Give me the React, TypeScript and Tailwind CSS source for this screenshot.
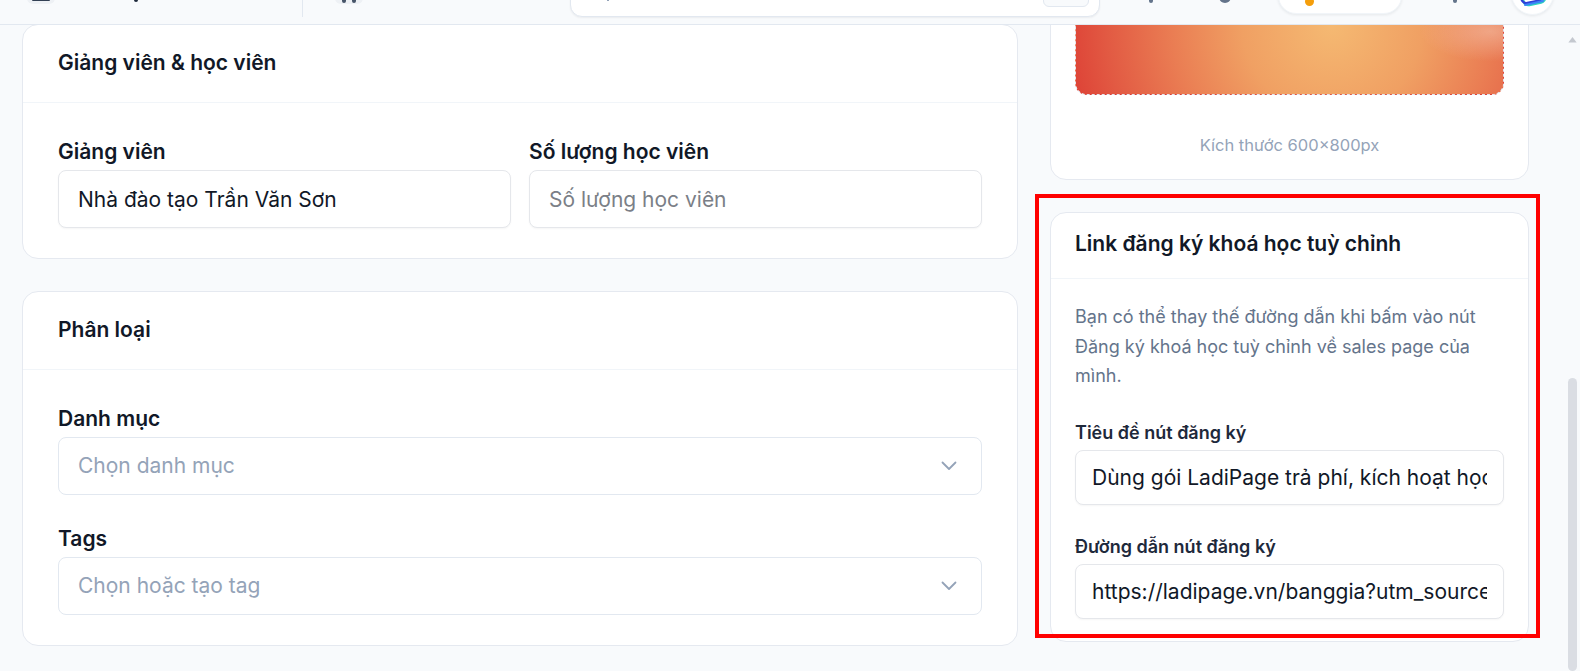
import React from "react";

type FieldProps = {
  label: string;
  value?: string;
  placeholder?: string;
};

function TopBar() {
  return (
    <div className="relative z-10 flex h-[25px] shrink-0 items-end overflow-hidden border-b border-[#e2e8f0] bg-[#f8fafc]">
      {/* menu toggle */}
      <div className="ml-[27px] mb-[20px] flex h-[34px] w-[28px] shrink-0 flex-col items-center justify-end rounded-md bg-[#eef1f5] pb-[3px]">
        <span className="h-[2px] w-[18px] rounded bg-[#334155]" />
      </div>
      <span className="ml-[79px] mb-[22px] h-[6px] w-[4px] shrink-0 rounded-b bg-[#1e293b]" />
      <span className="ml-[164px] mb-[7px] h-[30px] w-px shrink-0 bg-[#e2e8f0]" />
      {/* apps */}
      <div className="ml-[32px] mb-[20px] flex h-[30px] w-[28px] shrink-0 items-end justify-center gap-[6px] rounded-md bg-[#eef1f5] pb-[1px]">
        <span className="h-[3px] w-[4px] rounded-b bg-[#475569]" />
        <span className="h-[3px] w-[4px] rounded-b bg-[#475569]" />
      </div>
      {/* search */}
      <div className="ml-[207px] mb-[7px] flex h-[40px] w-[530px] shrink-0 items-end rounded-xl border border-[#e2e8f0] bg-white shadow-[0_1px_2px_rgba(15,23,42,0.06)]">
        <span className="ml-[36px] mb-[15px] h-[4px] w-[2px] bg-[#94a3b8]" />
        <span className="ml-auto mr-[10px] mb-[9px] h-[24px] w-[46px] rounded-md border border-[#e2e8f0] bg-[#f8fafc]" />
      </div>
      <span className="ml-[49px] mb-[21px] h-[6px] w-[4px] shrink-0 rounded-b bg-[#64748b]" />
      <span className="ml-[66px] mb-[21px] h-[12px] w-[12px] shrink-0 rounded-full bg-[#64748b]" />
      {/* credits */}
      <div className="ml-[47px] mb-[10px] flex h-[36px] w-[124px] shrink-0 items-end rounded-full border border-[#f1f5f9] bg-white shadow-[0_1px_3px_rgba(15,23,42,0.08)]">
        <span className="ml-[26px] mb-[7px] h-[9px] w-[9px] rounded-full bg-[#f59e0b]" />
      </div>
      <span className="ml-[51px] mb-[21px] h-[5px] w-[4px] shrink-0 rounded-b bg-[#64748b]" />
      {/* avatar */}
      <div className="ml-[54px] mb-[9px] flex h-[43px] w-[43px] shrink-0 items-end justify-center overflow-hidden rounded-full border border-[#f1f5f9] bg-white shadow-[0_1px_3px_rgba(15,23,42,0.08)]">
        <svg width="34" height="34" viewBox="0 0 34 34" className="mb-[4px]" fill="none">
          <rect x="6" y="6" width="22" height="22" rx="5" transform="rotate(-12 17 17)" stroke="#2dd4bf" strokeWidth="2.4" />
          <rect x="4" y="4" width="22" height="22" rx="5" transform="rotate(-12 15 15)" stroke="#2f3fd8" strokeWidth="2.4" />
          <path d="M9 29 L27 25" stroke="#3b82f6" strokeWidth="2" strokeLinecap="round" />
        </svg>
      </div>
    </div>
  );
}

function Chevron() {
  return (
    <svg width="16" height="10" viewBox="0 0 16 10" fill="none">
      <path d="M1.5 1.5 L8 8 L14.5 1.5" stroke="#94a3b8" strokeWidth="1.8" strokeLinecap="round" strokeLinejoin="round" />
    </svg>
  );
}

function TextField({ label, value, placeholder }: FieldProps) {
  return (
    <div>
      <label className="mb-[6px] block text-[21px] font-semibold leading-6 text-[#111827]">{label}</label>
      <input
        readOnly
        value={value ?? ""}
        placeholder={placeholder}
        className="block h-[58px] w-full rounded-lg border border-[#e5e7eb] bg-white px-[19px] text-[21px] text-[#111827] shadow-[0_1px_2px_rgba(0,0,0,0.04)] outline-none placeholder:text-[#7b7f87]"
      />
    </div>
  );
}

function SelectField({ label, placeholder }: FieldProps) {
  return (
    <div>
      <label className="mb-[6px] block text-[21px] font-semibold leading-6 text-[#111827]">{label}</label>
      <div className="flex h-[58px] w-full items-center justify-between rounded-lg border border-[#e2e8f0] bg-white pl-[19px] pr-[24px]">
        <span className="text-[21px] text-[#94a3b8]">{placeholder}</span>
        <Chevron />
      </div>
    </div>
  );
}

function SideField({ label, value }: FieldProps) {
  return (
    <div>
      <label className="mb-[5px] block text-[18px] font-semibold leading-6 text-[#1e293b]">{label}</label>
      <input
        readOnly
        value={value}
        className="block h-[55px] w-full rounded-lg border border-[#e5e7eb] bg-white px-4 text-[21px] text-[#111827] shadow-[0_1px_2px_rgba(0,0,0,0.04)] outline-none"
      />
    </div>
  );
}

function Card({ title, children }: { title: string; children: React.ReactNode }) {
  return (
    <section className="rounded-2xl border border-[#e5e9f0] bg-white">
      <header className="border-b border-[#f1f5f9] px-[35px] pt-[24px] pb-[25px]">
        <h2 className="text-[21px] font-semibold leading-7 text-[#111827]">{title}</h2>
      </header>
      <div className="px-[35px] pt-[37px] pb-[30px]">{children}</div>
    </section>
  );
}

function ScrollTrack() {
  return (
    <div className="flex w-[17px] shrink-0 flex-col items-center">
      <svg width="9" height="6" viewBox="0 0 9 6" className="mt-[12px] ml-[2px]">
        <path d="M4.5 0 L9 6 L0 6 Z" fill="#c4c8cf" />
      </svg>
      <div className="mt-[335px] ml-[2px] h-[320px] w-[9px] rounded-full bg-[#dadde3]" />
    </div>
  );
}

export default function App() {
  return (
    <div className="relative flex h-[671px] w-[1580px] flex-col overflow-hidden bg-[#f8fafc] font-['Inter',sans-serif]">
      <TopBar />

      <div className="flex min-h-0 flex-1">
        <div className="flex flex-1 gap-8 overflow-hidden pl-[22px]">
          {/* main column */}
          <div className="-mt-px flex w-[996px] shrink-0 flex-col gap-8">
            <Card title="Giảng viên & học viên">
              <div className="grid grid-cols-2 gap-[18px]">
                <TextField label="Giảng viên" value="Nhà đào tạo Trần Văn Sơn" />
                <TextField label="Số lượng học viên" placeholder="Số lượng học viên" />
              </div>
            </Card>

            <Card title="Phân loại">
              <div className="flex flex-col gap-8">
                <SelectField label="Danh mục" placeholder="Chọn danh mục" />
                <SelectField label="Tags" placeholder="Chọn hoặc tạo tag" />
              </div>
            </Card>
          </div>

          {/* sidebar column */}
          <div className="-mt-[255px] flex w-[479px] shrink-0 flex-col gap-8">
            <section className="rounded-2xl border border-[#e5e9f0] bg-white p-6">
              <div className="h-[300px] overflow-hidden rounded-xl border border-dashed border-[#e2e8f0] bg-[radial-gradient(ellipse_70px_30px_at_97%_79%,rgba(242,178,150,0.75),rgba(242,178,150,0)),radial-gradient(circle_at_60%_77%,#f5b972_0px,#f0a063_90px,#ea7d53_160px,#e25a43_225px,#dc3a32_280px)]" />
              <p className="mt-10 text-center text-[16.5px] leading-5 text-[#94a3b8]">Kích thước 600×800px</p>
            </section>

            <section className="rounded-2xl border border-[#e5e9f0] bg-white">
              <header className="border-b border-[#f1f5f9] px-6 pt-[17px] pb-[20px]">
                <h2 className="text-[21px] font-semibold leading-7 text-[#111827]">Link đăng ký khoá học tuỳ chỉnh</h2>
              </header>
              <div className="px-6 pt-[23px] pb-[22px]">
                <p className="max-w-[425px] text-[18px] leading-[29.5px] text-[#64748b]">
                  Bạn có thể thay thế đường dẫn khi bấm vào nút Đăng ký khoá học tuỳ chỉnh về sales page của mình.
                </p>
                <div className="mt-[30px] flex flex-col gap-[30px]">
                  <SideField label="Tiêu đề nút đăng ký" value="Dùng gói LadiPage trả phí, kích hoạt học viên không giới hạn" />
                  <SideField label="Đường dẫn nút đăng ký" value="https://ladipage.vn/banggia?utm_source=ladipage_course" />
                </div>
              </div>
            </section>
          </div>
        </div>

        <ScrollTrack />
      </div>

      <div className="pointer-events-none absolute left-[1035px] top-[194px] h-[444px] w-[505px] border-4 border-[#ff0000]" />
    </div>
  );
}
